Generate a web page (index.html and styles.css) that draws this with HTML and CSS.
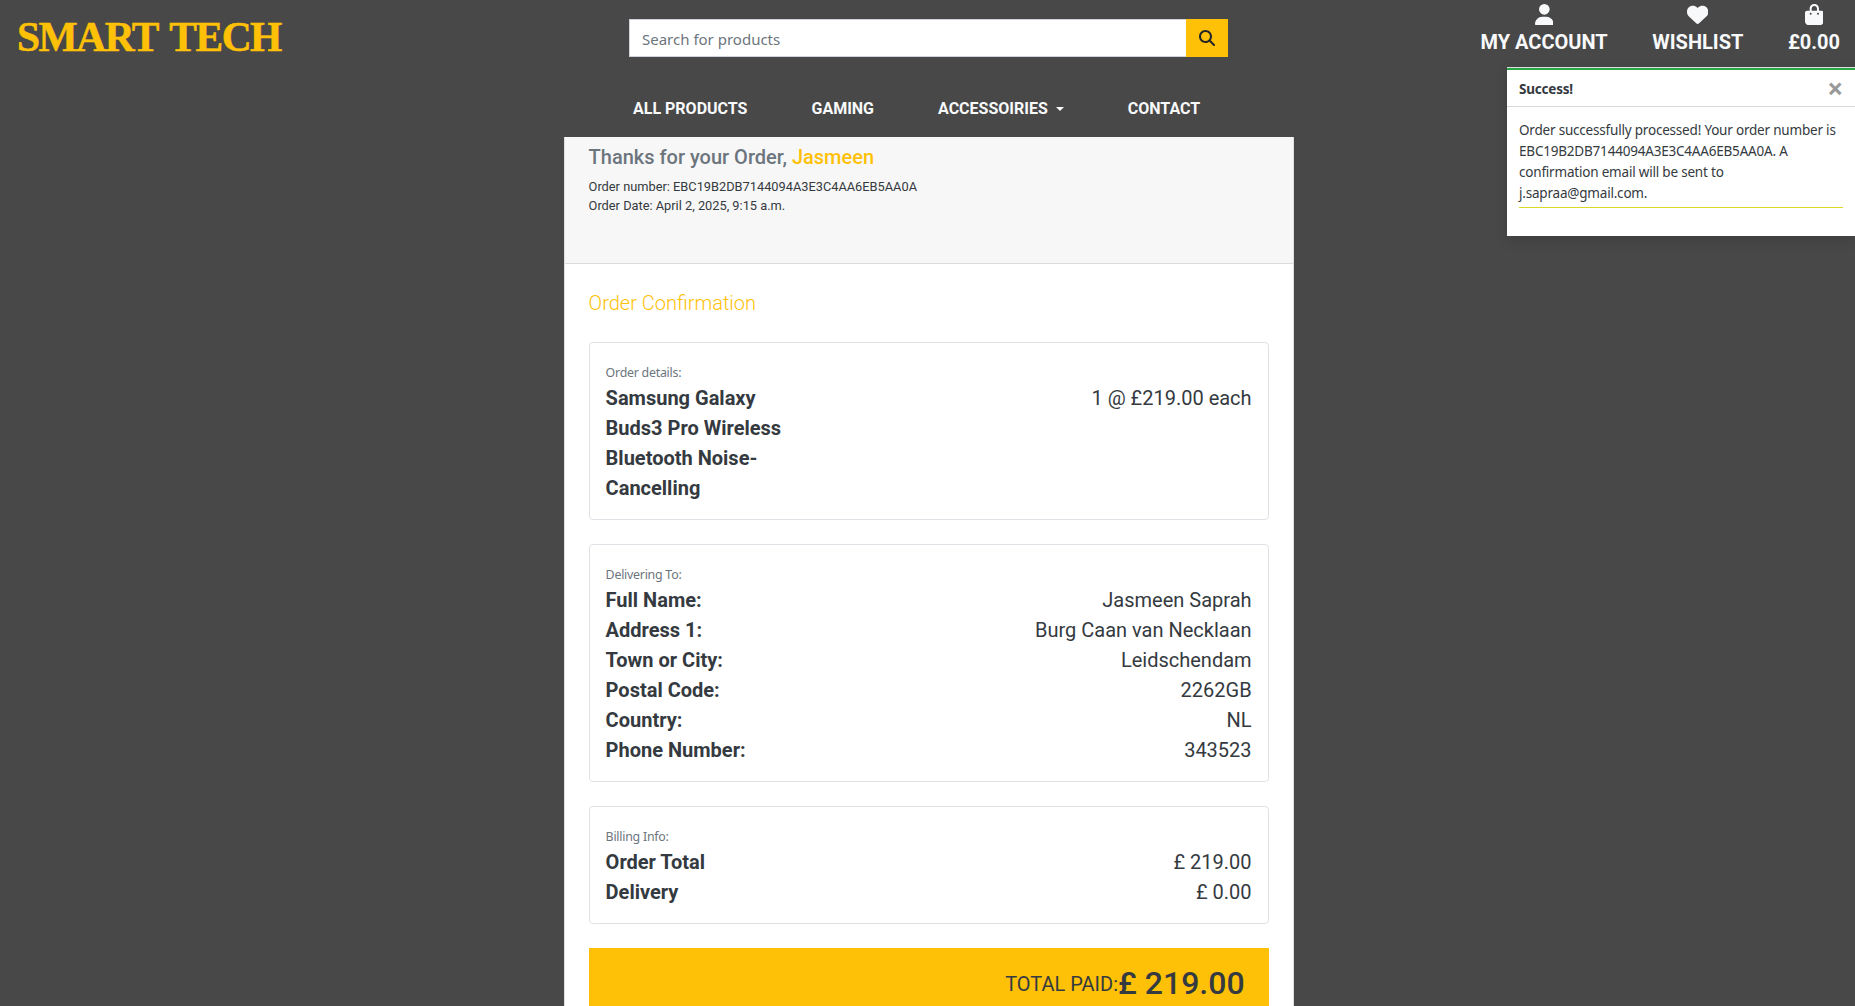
FILE: index.html
```html
<!DOCTYPE html>
<html lang="en">
<head>
<meta charset="utf-8">
<title>Smart Tech</title>
<link rel="stylesheet" href="styles.css">
</head>
<body>
<header class="site-header">
  <div class="topbar">
    <a class="logo">SMART TECH</a>
    <form class="search">
      <input class="search-input" type="text" placeholder="Search for products">
      <button class="search-btn" type="button" aria-label="Search"><svg width="16" height="16" viewBox="0 0 512 512"><path fill="currentColor" d="M416 208c0 45.9-14.9 88.3-40 122.7L502.6 457.4c12.5 12.5 12.5 32.8 0 45.3s-32.8 12.5-45.3 0L330.7 376c-34.4 25.2-76.8 40-122.7 40C93.1 416 0 322.9 0 208S93.1 0 208 0S416 93.1 416 208zM208 352a144 144 0 1 0 0-288 144 144 0 1 0 0 288z"/></svg></button>
    </form>
    <nav class="account">
      <a class="account-link"><svg width="18.67" height="21.33" viewBox="0 0 448 512"><path fill="currentColor" d="M224 256A128 128 0 1 0 224 0a128 128 0 1 0 0 256zm-45.7 48C79.8 304 0 383.8 0 482.3C0 498.7 13.3 512 29.7 512H418.3c16.4 0 29.7-13.3 29.7-29.7C448 383.8 368.2 304 269.7 304H178.3z"/></svg><span>MY ACCOUNT</span></a>
      <a class="account-link"><svg width="21.33" height="21.33" viewBox="0 0 512 512"><path fill="currentColor" d="M47.6 300.4L228.3 469.1c7.5 7 17.4 10.9 27.7 10.9s20.2-3.9 27.7-10.9L464.4 300.4c30.4-28.3 47.6-68 47.6-109.5v-5.8c0-69.9-50.5-129.5-119.4-141C347 36.5 300.6 51.4 268 84L256 96 244 84c-32.6-32.6-79-47.5-124.6-39.9C50.5 55.6 0 115.2 0 185.1v5.8c0 41.5 17.2 81.2 47.6 109.5z"/></svg><span>WISHLIST</span></a>
      <a class="account-link"><svg width="18.67" height="21.33" viewBox="0 0 448 512"><path fill="currentColor" d="M160 112c0-35.3 28.7-64 64-64s64 28.7 64 64v48H160V112zm-48 48H48c-26.5 0-48 21.5-48 48V416c0 53 43 96 96 96H352c53 0 96-43 96-96V208c0-26.5-21.5-48-48-48H336V112C336 50.1 285.9 0 224 0S112 50.1 112 112v48zm24 48a24 24 0 1 1 0 48 24 24 0 1 1 0-48zm152 24a24 24 0 1 1 48 0 24 24 0 1 1 -48 0z"/></svg><span>£0.00</span></a>
    </nav>
  </div>
  <nav class="main-nav">
    <a class="nav-link">ALL PRODUCTS</a>
    <a class="nav-link">GAMING</a>
    <a class="nav-link nav-drop">ACCESSOIRIES<i class="caret"></i></a>
    <a class="nav-link">CONTACT</a>
  </nav>
</header>

<main class="card">
  <div class="card-header">
    <h1 class="thanks">Thanks for your Order, <span class="name">Jasmeen</span></h1>
    <p class="meta">Order number: EBC19B2DB7144094A3E3C4AA6EB5AA0A</p>
    <p class="meta">Order Date: April 2, 2025, 9:15 a.m.</p>
  </div>
  <div class="card-body">
    <h2 class="confirm">Order Confirmation</h2>
    <section class="box">
      <small class="box-label">Order details:</small>
      <div class="row"><b class="product">Samsung Galaxy Buds3 Pro Wireless Bluetooth Noise-Cancelling</b><span>1 @ £219.00 each</span></div>
    </section>
    <section class="box">
      <small class="box-label">Delivering To:</small>
      <div class="row"><b>Full Name:</b><span>Jasmeen Saprah</span></div>
      <div class="row"><b>Address 1:</b><span>Burg Caan van Necklaan</span></div>
      <div class="row"><b>Town or City:</b><span>Leidschendam</span></div>
      <div class="row"><b>Postal Code:</b><span>2262GB</span></div>
      <div class="row"><b>Country:</b><span>NL</span></div>
      <div class="row"><b>Phone Number:</b><span>343523</span></div>
    </section>
    <section class="box">
      <small class="box-label">Billing Info:</small>
      <div class="row"><b>Order Total</b><span>£ 219.00</span></div>
      <div class="row"><b>Delivery</b><span>£ 0.00</span></div>
    </section>
    <div class="total"><span class="total-label">TOTAL PAID:</span><span class="total-value">£ 219.00</span></div>
  </div>
</main>

<aside class="toast">
  <div class="toast-arrow"></div>
  <div class="toast-header"><strong>Success!</strong><span class="close">×</span></div>
  <div class="toast-body">
    <p class="toast-text">Order successfully processed! Your order number is EBC19B2DB7144094A3E3C4AA6EB5AA0A. A confirmation email will be sent to j.sapraa@gmail.com.</p>
  </div>
</aside>
</body>
</html>
```
FILE: styles.css
```css
* { box-sizing: border-box; }
html { height: 100%; overflow: hidden; }
body {
  margin: 0;
  height: 100%;
  overflow: hidden;
  position: relative;
  background: #484848;
  color: #343a40;
  font-family: Roboto, "Liberation Sans", sans-serif;
  font-size: 16px;
  line-height: 24px;
}
h1, h2, p { margin: 0; }

.site-header { height: 137px; color: #f8f9fa; }
.topbar {
  display: grid;
  grid-template-columns: 629px 599px 1fr;
  height: 76px;
}
.logo {
  padding: 13px 0 0 17px;
  font: bold 41.5px/48px "Liberation Serif", serif;
  letter-spacing: -1.5px;
  word-spacing: 4px;
  -webkit-text-stroke: .5px #ffc107;
  color: #ffc107;
  white-space: nowrap;
}
.search { display: flex; height: 38px; margin-top: 19px; }
.search-input {
  flex: 1;
  min-width: 0;
  border: 1px solid #ced4da;
  border-right: 0;
  padding: 7px 12px 5px;
  font: 15px/24px "Noto Sans", sans-serif;
}
.search-input::placeholder { color: #6c757d; opacity: 1; }
.search-btn {
  width: 42px;
  padding: 0;
  border: 0;
  background: #ffc107;
  color: #212529;
}
.search-btn svg { display: block; margin: 0 auto; }
.account {
  display: flex;
  justify-content: flex-end;
  gap: 44.5px;
  padding: 4px 15px 0 0;
}
.account-link {
  display: flex;
  flex-direction: column;
  align-items: center;
  font-size: 20px;
  font-weight: 700;
}
.account-link svg { display: block; }
.account-link span { margin-top: 5px; }

.main-nav {
  display: flex;
  gap: 64px;
  padding: 21px 0 0 633px;
}
.nav-link { font-weight: 700; white-space: nowrap; }
.nav-drop { display: flex; align-items: center; gap: 8px; }
.caret {
  border-top: 4.8px solid;
  border-left: 4.8px solid transparent;
  border-right: 4.8px solid transparent;
}

.card {
  width: 730px;
  height: 900px;
  margin-left: 563.6px;
  background: #fff;
  border: 1px solid #dfdfdf;
  border-top: 0;
}
.card-header {
  height: 127px;
  padding: 8px 24px 0;
  background: #f7f7f7;
  border-bottom: 1px solid #dadbdc;
}
.thanks { font-size: 20px; font-weight: 500; line-height: 24px; color: #6c757d; margin-bottom: 8px; }
.name { color: #ffc107; }
.meta { font-size: 12.8px; line-height: 19px; }
.card-body { padding: 24px; }
.confirm { font-size: 20px; font-weight: 300; line-height: 30px; color: #ffc107; margin-bottom: 24px; }
.box {
  border: 1px solid #dee2e6;
  border-radius: 4px;
  padding: 16px;
  margin-bottom: 24px;
}
.box-label {
  display: block;
  height: 24px;
  font: 12.4px/27px "Noto Sans", sans-serif;
  letter-spacing: -.25px;
  color: #6c757d;
}
.row {
  display: flex;
  justify-content: space-between;
  font-size: 20px;
  line-height: 30px;
}
.row b { font-weight: 700; }
.product { width: 190px; }
.total {
  display: flex;
  justify-content: flex-end;
  align-items: flex-start;
  height: 72px;
  padding: 16px 24px;
  background: #ffc107;
}
.total-label { font-size: 20px; margin-top: 8px; }
.total-value { font-size: 32px; font-weight: 500; line-height: 38px; }

/* floats over the page under the bag link */
.toast {
  position: absolute;
  top: 67px;
  right: 0;
  width: 348px;
  height: 169px;
  background: #fff;
  box-shadow: 0 4px 12px rgba(0, 0, 0, .15);
  font-family: "Noto Sans", sans-serif;
  font-size: 13.5px;
  letter-spacing: -.2px;
  line-height: 21px;
}
.toast-arrow { height: 3px; border-top: 1px solid #dedede; background: #28a745; }
.toast-header {
  display: flex;
  justify-content: space-between;
  align-items: center;
  height: 37px;
  padding: 0 12px;
  border-bottom: 1px solid #d6d8da;
}
.toast-header strong { padding-top: 2px; }
.close { font: bold 28px/28px "Open Sans", sans-serif; color: #999; }
.toast-body { padding: 13px 12px 12px; }
.toast-text { height: 88px; border-bottom: 1px solid #d9d926; }
```
